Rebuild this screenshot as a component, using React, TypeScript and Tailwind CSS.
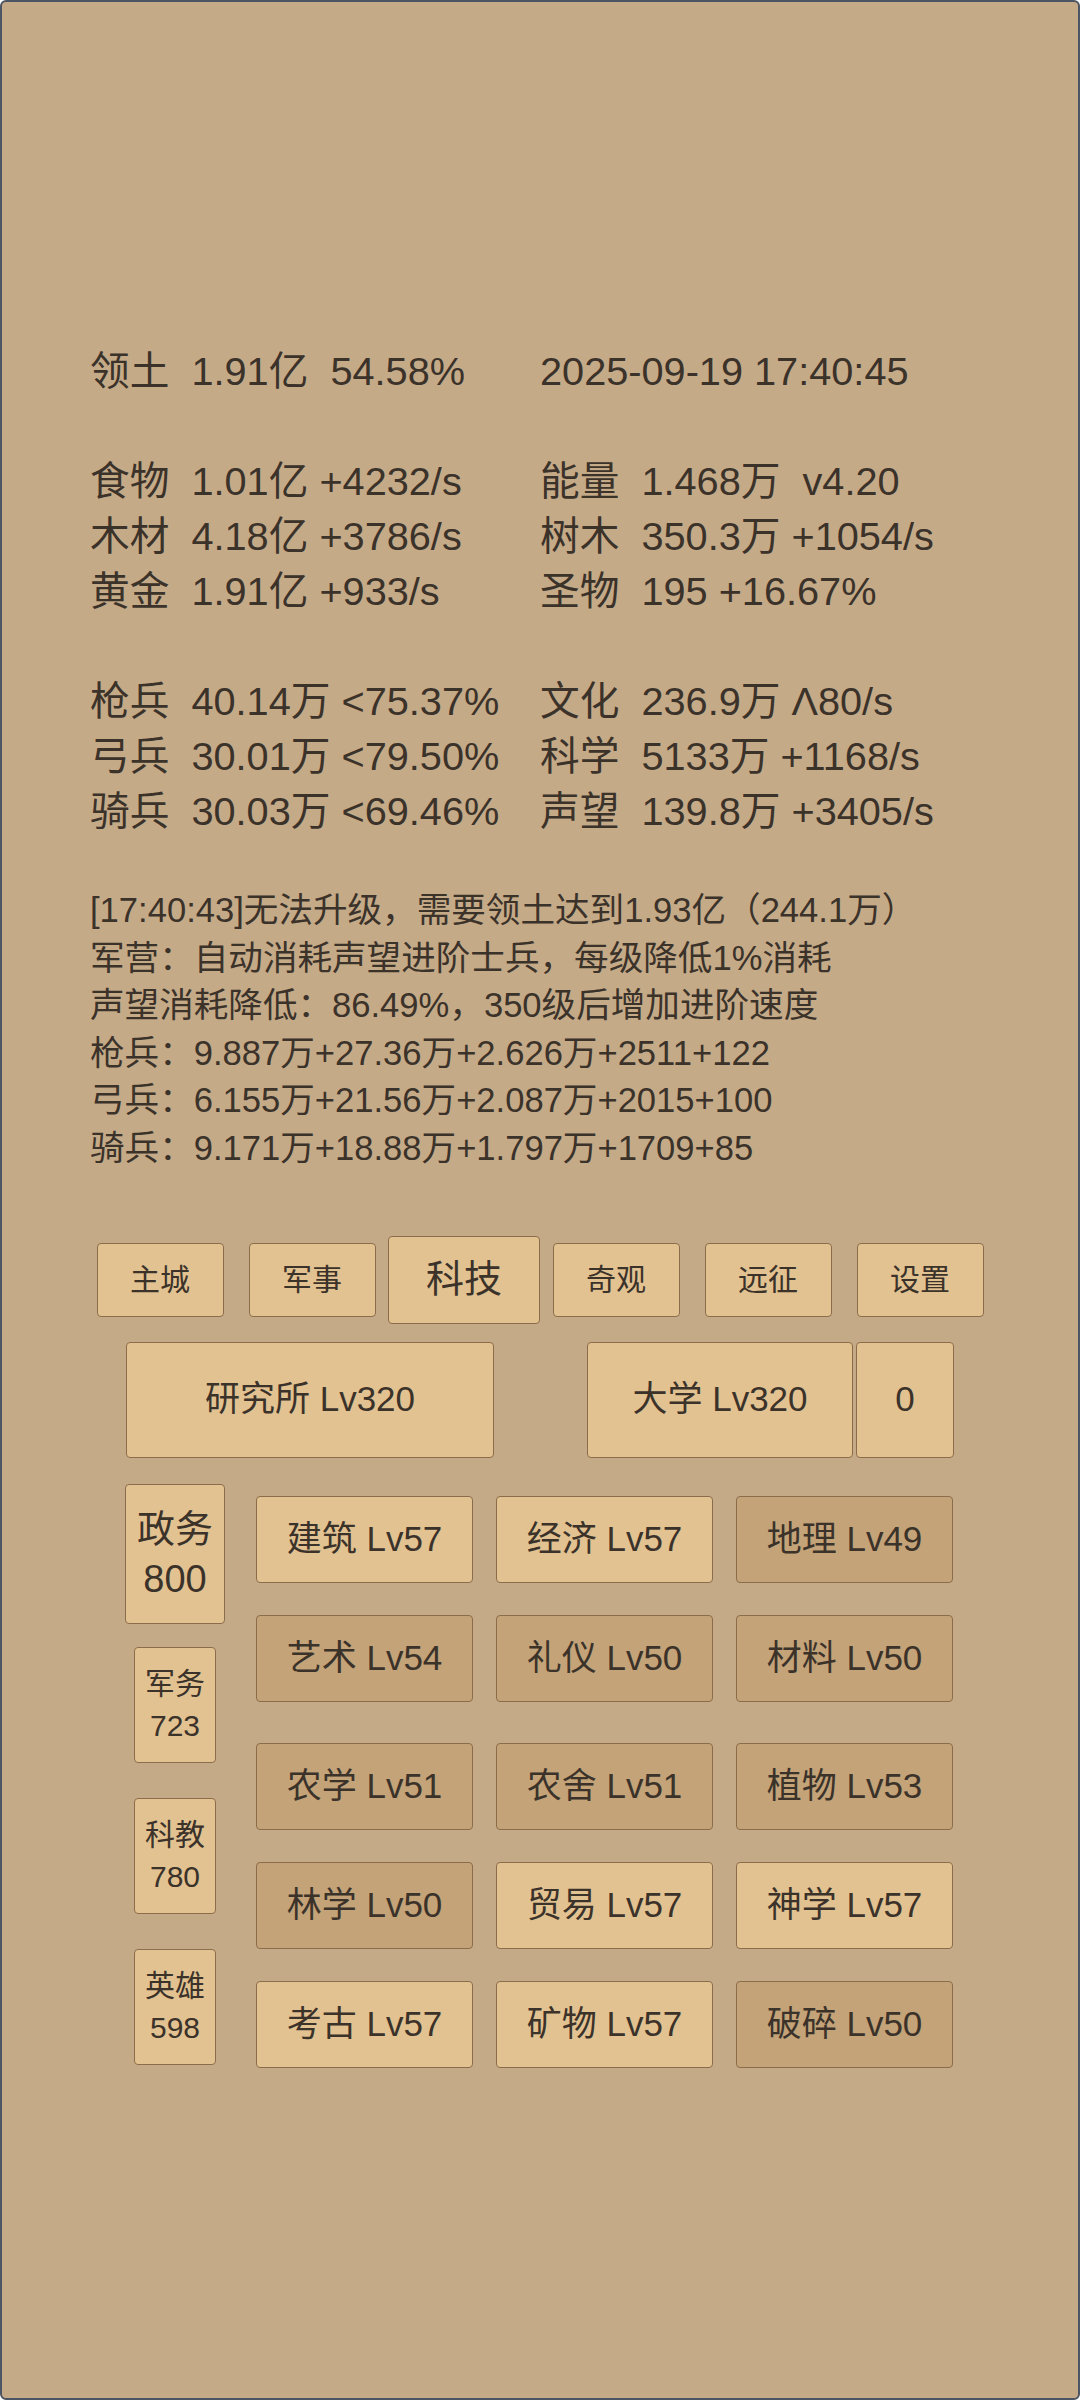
import React from 'react';

type Cell = { label: string; value: string };

const statRows: (null | [Cell, Cell])[] = [
  [
    { label: '领土', value: '1.91亿  54.58%' },
    { label: '', value: '2025-09-19 17:40:45' },
  ],
  null,
  [
    { label: '食物', value: '1.01亿 +4232/s' },
    { label: '能量', value: '1.468万  v4.20' },
  ],
  [
    { label: '木材', value: '4.18亿 +3786/s' },
    { label: '树木', value: '350.3万 +1054/s' },
  ],
  [
    { label: '黄金', value: '1.91亿 +933/s' },
    { label: '圣物', value: '195 +16.67%' },
  ],
  null,
  [
    { label: '枪兵', value: '40.14万 <75.37%' },
    { label: '文化', value: '236.9万 Λ80/s' },
  ],
  [
    { label: '弓兵', value: '30.01万 <79.50%' },
    { label: '科学', value: '5133万 +1168/s' },
  ],
  [
    { label: '骑兵', value: '30.03万 <69.46%' },
    { label: '声望', value: '139.8万 +3405/s' },
  ],
];

const logLines = [
  '[17:40:43]无法升级，需要领土达到1.93亿（244.1万）',
  '军营：自动消耗声望进阶士兵，每级降低1%消耗',
  '声望消耗降低：86.49%，350级后增加进阶速度',
  '枪兵：9.887万+27.36万+2.626万+2511+122',
  '弓兵：6.155万+21.56万+2.087万+2015+100',
  '骑兵：9.171万+18.88万+1.797万+1709+85',
];

const tabs = ['主城', '军事', '科技', '奇观', '远征', '设置'];
const activeTab = '科技';

const sideItems = [
  { name: '政务', count: 800 },
  { name: '军务', count: 723 },
  { name: '科教', count: 780 },
  { name: '英雄', count: 598 },
];
const activeSide = '政务';

const techRows: { name: string; lv: number; dark: boolean }[][] = [
  [
    { name: '建筑', lv: 57, dark: false },
    { name: '经济', lv: 57, dark: false },
    { name: '地理', lv: 49, dark: true },
  ],
  [
    { name: '艺术', lv: 54, dark: true },
    { name: '礼仪', lv: 50, dark: true },
    { name: '材料', lv: 50, dark: true },
  ],
  [
    { name: '农学', lv: 51, dark: true },
    { name: '农舍', lv: 51, dark: true },
    { name: '植物', lv: 53, dark: true },
  ],
  [
    { name: '林学', lv: 50, dark: true },
    { name: '贸易', lv: 57, dark: false },
    { name: '神学', lv: 57, dark: false },
  ],
  [
    { name: '考古', lv: 57, dark: false },
    { name: '矿物', lv: 57, dark: false },
    { name: '破碎', lv: 50, dark: true },
  ],
];
const rowMargins = ['mt-0', 'mt-[32px]', 'mt-[41px]', 'mt-[32px]', 'mt-[32px]'];

const btn = 'flex items-center justify-center border border-[#8b6d4c] rounded-[4px]';

const StatCell: React.FC<Cell> = ({ label, value }) => (
  <div className="whitespace-pre">
    {label ? `${label}  ${value}` : value}
  </div>
);

const App: React.FC = () => {
  return (
    <div className="w-[1080px] h-[2400px] bg-[#c5aa88] border-2 border-[#4b5563] rounded-[6px] overflow-hidden text-[#3b322a] font-['Liberation_Sans','Noto_Sans_CJK_SC',sans-serif]">
      {/* stats */}
      <div className="pt-[342px] pl-[88px] text-[39.7px] leading-[55px]">
        {statRows.map((row, i) =>
          row ? (
            <div key={i} className="grid grid-cols-[450px_1fr]">
              <StatCell {...row[0]} />
              <StatCell {...row[1]} />
            </div>
          ) : (
            <div key={i} className="h-[55px]" />
          )
        )}
      </div>

      {/* log */}
      <div className="mt-[48px] pl-[88px] text-[34.6px] leading-[47.6px]">
        {logLines.map((line) => (
          <div key={line} className="whitespace-pre">{line}</div>
        ))}
      </div>

      {/* tabs */}
      <div className="mt-[63px] ml-[82px] flex h-[88px] items-center">
        {tabs.map((t) => (
          <div key={t} className="w-[152px] flex justify-center">
            {t === activeTab ? (
              <div className={`${btn} w-[153px] h-[88px] bg-[#e3c291] text-[38px]`}>{t}</div>
            ) : (
              <div className={`${btn} w-[127px] h-[74px] bg-[#e3c291] text-[30px]`}>{t}</div>
            )}
          </div>
        ))}
      </div>

      {/* buildings */}
      <div className="mt-[18px] ml-[124px] flex text-[35px]">
        <div className={`${btn} w-[368px] h-[116px] bg-[#e3c291]`}>研究所 Lv320</div>
        <div className={`${btn} ml-[93px] w-[266px] h-[116px] bg-[#e3c291]`}>大学 Lv320</div>
        <div className={`${btn} ml-[3px] w-[98px] h-[116px] bg-[#e3c291]`}>0</div>
      </div>

      {/* tech panel */}
      <div className="mt-[21px] ml-[98px] flex">
        <div className="w-[150px] flex flex-col">
          {sideItems.map((s) => (
            <div key={s.name} className="h-[151px] flex items-center justify-center">
              {s.name === activeSide ? (
                <div className={`${btn} flex-col w-[100px] h-[140px] bg-[#e3c291] text-[38px] leading-[50px]`}>
                  <span>{s.name}</span>
                  <span>{s.count}</span>
                </div>
              ) : (
                <div className={`${btn} flex-col w-[82px] h-[116px] bg-[#e3c291] text-[30px] leading-[42px]`}>
                  <span>{s.name}</span>
                  <span>{s.count}</span>
                </div>
              )}
            </div>
          ))}
        </div>
        <div className="ml-[6px] mt-[17px] flex flex-col">
          {techRows.map((row, i) => (
            <div key={i} className={`flex gap-[23px] ${rowMargins[i]}`}>
              {row.map((c) => (
                <div
                  key={c.name}
                  className={`${btn} w-[217px] h-[87px] text-[35px] ${c.dark ? 'bg-[#c4a378]' : 'bg-[#e3c291]'}`}
                >
                  {c.name} Lv{c.lv}
                </div>
              ))}
            </div>
          ))}
        </div>
      </div>
    </div>
  );
};

export default App;
